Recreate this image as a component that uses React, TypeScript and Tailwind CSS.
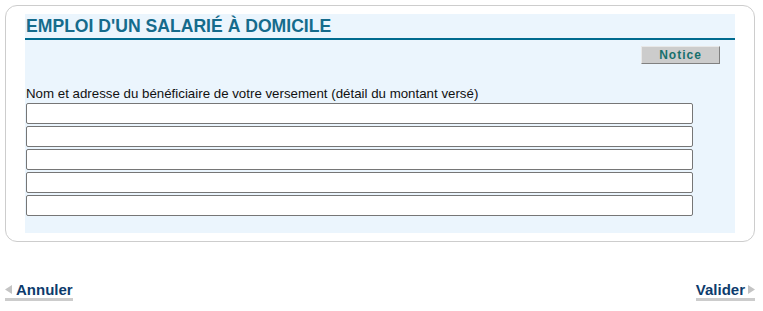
import React from "react";

function Arrow({ dir }: { dir: "left" | "right" }) {
  return (
    <svg width="7" height="9" viewBox="0 0 7 9" className="shrink-0">
      {dir === "left" ? (
        <polygon points="7,0 7,9 0,4.5" fill="#c4c4c4" />
      ) : (
        <polygon points="0,0 0,9 7,4.5" fill="#c4c4c4" />
      )}
    </svg>
  );
}

export default function App() {
  const rows = [0, 1, 2, 3, 4];

  return (
    <div className="w-[763px] h-[311px] bg-white font-['Liberation_Sans',Arial,sans-serif] overflow-hidden">
      {/* card */}
      <div className="ml-[5px] mr-[8px] mt-[5px] border border-[#cdcdcd] rounded-[12px] px-[19px] pt-[8px] pb-[8px]">
        <div className="bg-[#ebf5fd] pb-[17px]">
          <h1 className="pl-[1px] pt-[1px] text-[17.6px] leading-[23px] font-bold text-[#156b8c] border-b-2 border-[#006b8f]">
            EMPLOI D'UN SALARIÉ À DOMICILE
          </h1>
          <div className="flex justify-end pr-[15px] mt-[6px]">
            <button className="w-[79px] h-[18px] bg-[#cccccc] border border-t-[#e8e8e8] border-l-[#e8e8e8] border-r-[#808080] border-b-[#808080] text-[12px] leading-[14px] font-bold text-[#17706c] tracking-[1px]">
              Notice
            </button>
          </div>
          <div className="mt-[22px] pl-[1px] text-[13.3px] leading-[15px] text-[#111111]">
            Nom et adresse du bénéficiaire de votre versement (détail du montant versé)
          </div>
          <div className="mt-[2px] pl-[1px] flex flex-col gap-[2px]">
            {rows.map((r) => (
              <input
                key={r}
                type="text"
                className="w-[667px] h-[21px] bg-white border border-[#767676] rounded-[2px] outline-none"
              />
            ))}
          </div>
        </div>
      </div>

      {/* footer */}
      <div className="flex justify-between pl-[5px] pr-[8px] mt-[39px]">
        <a className="flex items-center gap-[4px] border-b-[3px] border-[#cccccc] text-[15px] leading-[17px] font-bold text-[#0c3b6c] cursor-pointer">
          <Arrow dir="left" />
          Annuler
        </a>
        <a className="flex items-center gap-[3px] border-b-[3px] border-[#cccccc] text-[15px] leading-[17px] font-bold text-[#0c3b6c] cursor-pointer">
          Valider
          <Arrow dir="right" />
        </a>
      </div>
    </div>
  );
}
